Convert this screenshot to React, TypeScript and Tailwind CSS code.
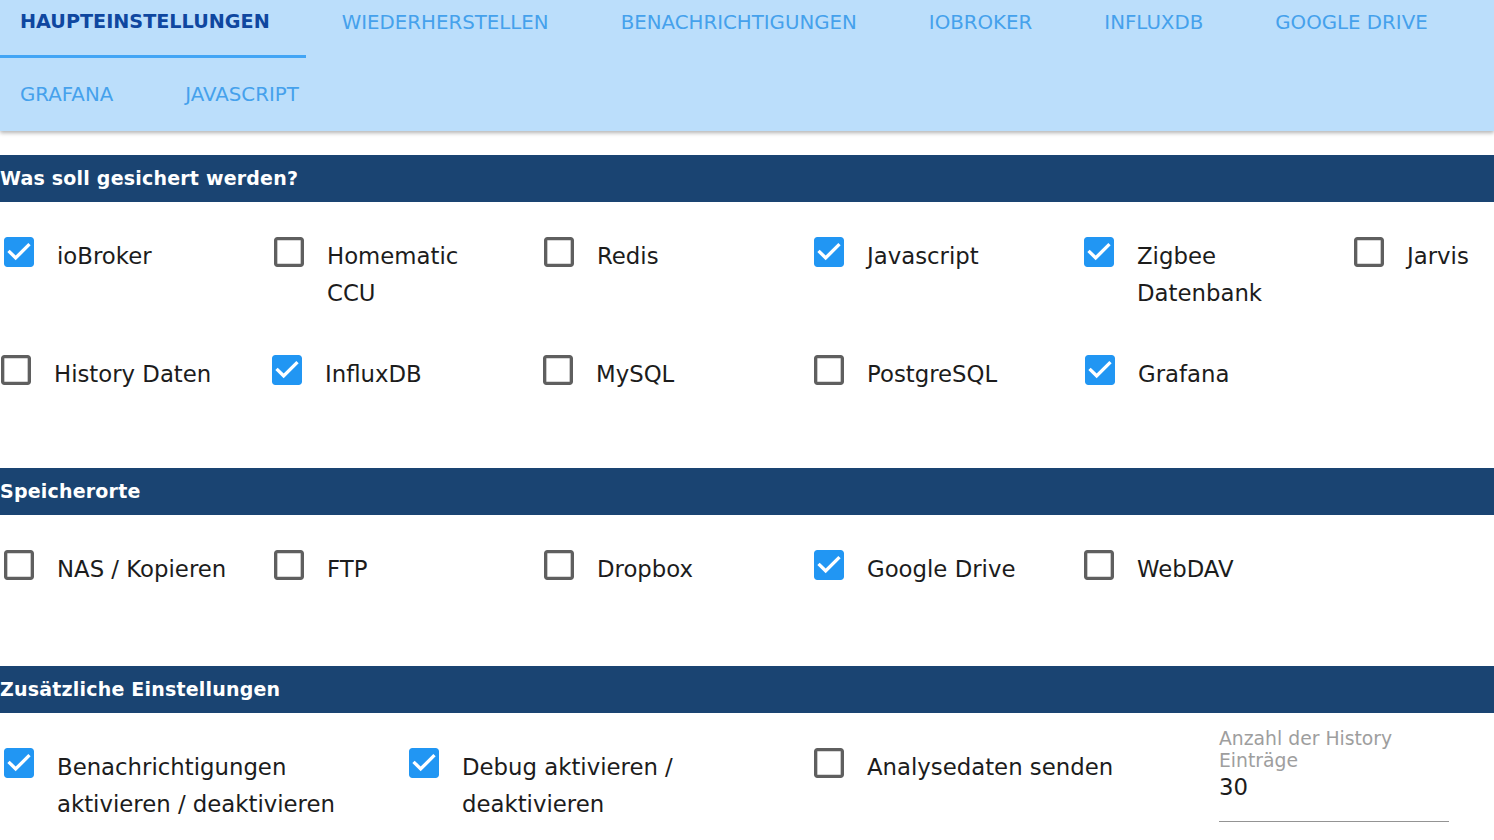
import React from 'react';

type Item = { label: string; checked: boolean };

const FONT = { fontFamily: '"DejaVu Sans", "Liberation Sans", sans-serif' };

const TAB_ROWS: string[][] = [
  ['Haupteinstellungen', 'Wiederherstellen', 'Benachrichtigungen', 'ioBroker', 'InfluxDB', 'Google Drive'],
  ['Grafana', 'Javascript'],
];

const BACKUP_ROW_1: Item[] = [
  { label: 'ioBroker', checked: true },
  { label: 'Homematic CCU', checked: false },
  { label: 'Redis', checked: false },
  { label: 'Javascript', checked: true },
  { label: 'Zigbee Datenbank', checked: true },
  { label: 'Jarvis', checked: false },
];

const BACKUP_ROW_2: Item[] = [
  { label: 'History Daten', checked: false },
  { label: 'InfluxDB', checked: true },
  { label: 'MySQL', checked: false },
  { label: 'PostgreSQL', checked: false },
  { label: 'Grafana', checked: true },
];

const STORAGE: Item[] = [
  { label: 'NAS / Kopieren', checked: false },
  { label: 'FTP', checked: false },
  { label: 'Dropbox', checked: false },
  { label: 'Google Drive', checked: true },
  { label: 'WebDAV', checked: false },
];

const EXTRA: Item[] = [
  { label: 'Benachrichtigungen aktivieren / deaktivieren', checked: true },
  { label: 'Debug aktivieren / deaktivieren', checked: true },
  { label: 'Analysedaten senden', checked: false },
];

const CheckIcon = ({ checked }: { checked: boolean }) =>
  checked ? (
    <svg viewBox="0 0 24 24" className="h-10 w-10 shrink-0 -ml-px" fill="#2196f3">
      <path d="M19 3H5c-1.11 0-2 .9-2 2v14c0 1.1.89 2 2 2h14c1.11 0 2-.9 2-2V5c0-1.1-.89-2-2-2zm-9 14l-5-5 1.41-1.41L10 14.17l7.59-7.59L19 8l-9 9z" />
    </svg>
  ) : (
    <svg viewBox="0 0 24 24" className="h-10 w-10 shrink-0 -ml-px" fill="#5f5f5f">
      <path d="M19 5v14H5V5h14m0-2H5c-1.1 0-2 .9-2 2v14c0 1.1.9 2 2 2h14c1.1 0 2-.9 2-2V5c0-1.1-.9-2-2-2z" />
    </svg>
  );

const CheckCell = ({ item, wide }: { item: Item; wide?: boolean }) => (
  <div className={`flex shrink-0 items-start pt-[30px] ${wide ? 'w-[405px]' : 'w-[270px]'}`}>
    <CheckIcon checked={item.checked} />
    <span
      className={`ml-[18px] mt-[6px] text-[22.8px] leading-[37px] text-[#1c1c1c] ${wide ? 'max-w-[317px]' : 'max-w-[182px]'}`}
    >
      {item.label}
    </span>
  </div>
);

const SectionHeader = ({ title }: { title: string }) => (
  <div className="flex h-[47px] items-center bg-[#1a4472] text-[19px] font-bold tracking-[0.2px] text-white">
    {title}
  </div>
);

export default function App() {
  return (
    <div className="h-screen w-full overflow-hidden bg-white" style={FONT}>
      <div className="relative z-10 h-[131px] overflow-hidden bg-[#bbdefb] shadow-[0_2px_4px_rgba(0,0,0,0.3)]">
        <div className="-mt-[13px] -ml-4">
          {TAB_ROWS.map((row, r) => (
            <div key={r} className={`flex ${r === 0 ? 'h-[71px]' : 'h-[73px]'}`}>
              {row.map((tab) => {
                const active = tab === 'Haupteinstellungen';
                return (
                  <div
                    key={tab}
                    className={`relative flex items-center px-9 uppercase ${
                      active ? 'text-[19.2px] font-bold text-[#0f47a0]' : 'text-[19.8px] text-[#45a1ec]'
                    }`}
                  >
                    {tab}
                    {active && <div className="absolute bottom-0 left-0 right-0 h-[3px] bg-[#42a5f5]" />}
                  </div>
                );
              })}
            </div>
          ))}
        </div>
      </div>

      <div className="mt-6">
        <SectionHeader title="Was soll gesichert werden?" />
        <div className="mb-[30px]">
          <div className="flex h-[118px]">
            {BACKUP_ROW_1.map((item) => (
              <CheckCell key={item.label} item={item} />
            ))}
          </div>
          <div className="-ml-[3px] flex h-[118px] [&>div]:w-[271px]">
            {BACKUP_ROW_2.map((item) => (
              <CheckCell key={item.label} item={item} />
            ))}
          </div>
        </div>

        <SectionHeader title="Speicherorte" />
        <div className="mb-[33px] flex h-[118px]">
          {STORAGE.map((item) => (
            <CheckCell key={item.label} item={item} />
          ))}
        </div>

        <SectionHeader title="Zusätzliche Einstellungen" />
        <div className="flex">
          {EXTRA.map((item) => (
            <CheckCell key={item.label} item={item} wide />
          ))}
          <div className="w-[234px] shrink-0 pl-1 pt-[15px]">
            <div className="text-[18.8px] leading-[22px] text-[#9e9e9e]">Anzahl der History Einträge</div>
            <div className="border-b border-[#949494] pb-[19px] text-[22.8px] leading-[30px] text-[#1c1c1c]">30</div>
          </div>
        </div>
      </div>
    </div>
  );
}
